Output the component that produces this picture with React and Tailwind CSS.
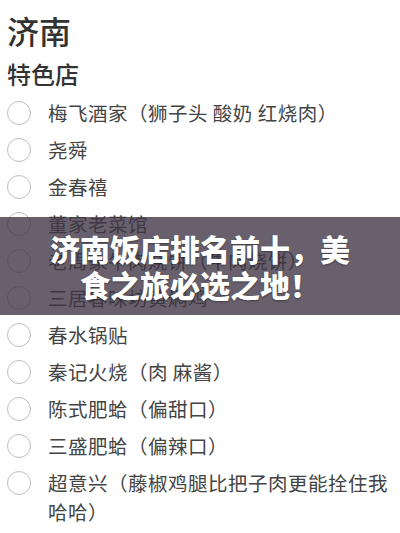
import React from 'react';

const items = [
  '梅飞酒家（狮子头 酸奶 红烧肉）',
  '尧舜',
  '金春禧',
  '董家老菜馆',
  '老周家牛肉烧饼（牛肉烧饼）',
  '三居春味坊黄焖鸡',
  '春水锅贴',
  '秦记火烧（肉 麻酱）',
  '陈式肥蛤（偏甜口）',
  '三盛肥蛤（偏辣口）',
  '超意兴（藤椒鸡腿比把子肉更能拴住我哈哈）',
];

export default function App() {
  return (
    <div
      className="relative h-[533px] w-[400px] overflow-hidden bg-white text-[#3c3c3c]"
      style={{ fontFamily: '"Noto Sans CJK SC", "Noto Sans", sans-serif' }}
    >
      <div className="pl-[7px] pr-[8px] pt-[10px]">
        <h1 className="text-[32px] font-medium leading-[40px] text-[#333]">济南</h1>
        <h2 className="mt-[8px] text-[24px] font-medium leading-[32px] text-[#333]">特色店</h2>

        <ul className="mt-[4px]">
          {items.map((name) => (
            <li key={name} className="flex items-start py-[4px]">
              <div className="flex h-[29px] w-[41px] shrink-0 items-center">
                <div className="h-6 w-6 rounded-full border-[1.5px] border-[#bdbdbd]" />
              </div>
              <span className="text-[19.5px] leading-[29px] tracking-[0.5px] text-[#444]">{name}</span>
            </li>
          ))}
          {/* next row, only its radio peeks in at the bottom edge */}
          <li className="flex items-start pt-[0px]">
            <div className="flex h-[29px] w-[41px] shrink-0 items-center">
              <div className="h-6 w-6 rounded-full border-[1.5px] border-[#bdbdbd]" />
            </div>
          </li>
        </ul>
      </div>

      {/* Title banner over the list */}
      <div className="absolute left-0 right-0 top-[217px] flex h-[98px] items-center justify-center bg-[rgba(62,52,68,0.78)] px-[46px]">
        <p className="text-center text-[30px] font-black leading-[36px] text-white [text-shadow:0_1px_2px_rgba(0,0,0,0.4)]">
          济南饭店排名前十，美食之旅必选之地！
        </p>
      </div>
    </div>
  );
}
